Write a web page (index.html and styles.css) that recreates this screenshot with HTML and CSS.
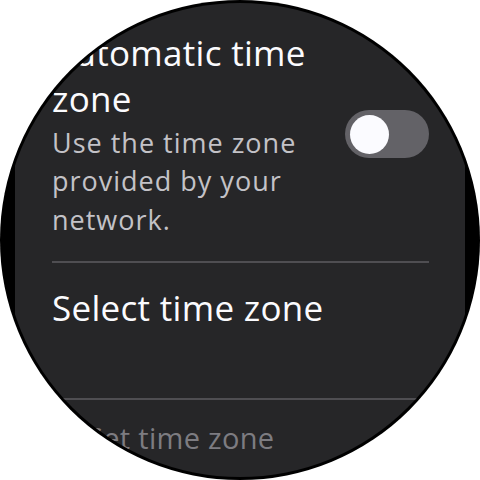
FILE: index.html
```html
<!DOCTYPE html>
<html>
<head>
<meta charset="utf-8">
<link rel="stylesheet" href="styles.css">
</head>
<body>
<div class="watch">
  <div class="screen">
    <div class="list">
      <div class="item toggle-item">
        <div class="texts">
          <div class="title">Automatic time zone</div>
          <div class="subtitle">Use the time zone provided by your network.</div>
        </div>
        <div class="switch"><div class="thumb"></div></div>
      </div>
      <div class="divider divider-first"></div>
      <div class="item select-item">
        <div class="title">Select time zone</div>
      </div>
      <div class="divider divider-second"></div>
      <div class="item faded-item">
        <div class="faded-title">Set time zone<br>location</div>
      </div>
    </div>
  </div>
</div>
</body>
</html>
```
FILE: styles.css
```css
html, body {
  margin: 0;
  padding: 0;
  background: #ffffff;
}
.watch {
  width: 480px;
  height: 480px;
  border-radius: 50%;
  background: #000000;
  overflow: hidden;
  display: flex;
  justify-content: center;
}
.screen {
  width: 450px;
  height: 480px;
  background: #262628;
  clip-path: circle(237px at 225px 240px);
  overflow: hidden;
  font-family: "Open Sans", "Noto Sans", sans-serif;
}
.list {
  padding: 30px 36px 0 37px;
  display: flex;
  flex-direction: column;
}
.toggle-item {
  display: flex;
  align-items: center;
  gap: 12px;
}
.texts {
  width: 283px;
}
.title {
  font-size: 35px;
  line-height: 46px;
  letter-spacing: 0.3px;
  color: #fbfbfe;
}
.subtitle {
  margin-top: 2px;
  font-size: 27px;
  line-height: 38.3px;
  letter-spacing: 1px;
  color: #c3c2c7;
}
.switch {
  width: 85px;
  height: 48px;
  border-radius: 24px;
  background: #636267;
  display: flex;
  align-items: center;
  padding-left: 5px;
  box-sizing: border-box;
}
.thumb {
  width: 39px;
  height: 39px;
  border-radius: 50%;
  background: #fbfbff;
}
.divider {
  height: 2px;
  background: #4f4e52;
}
.divider-first {
  margin-top: 22px;
}
.select-item {
  margin-top: 22px;
  height: 113px;
}
.faded-item {
  margin-top: 18px;
  padding-left: 35px;
}
.faded-title {
  font-size: 29px;
  line-height: 39px;
  letter-spacing: 0.3px;
  color: #7d7c81;
}
```
